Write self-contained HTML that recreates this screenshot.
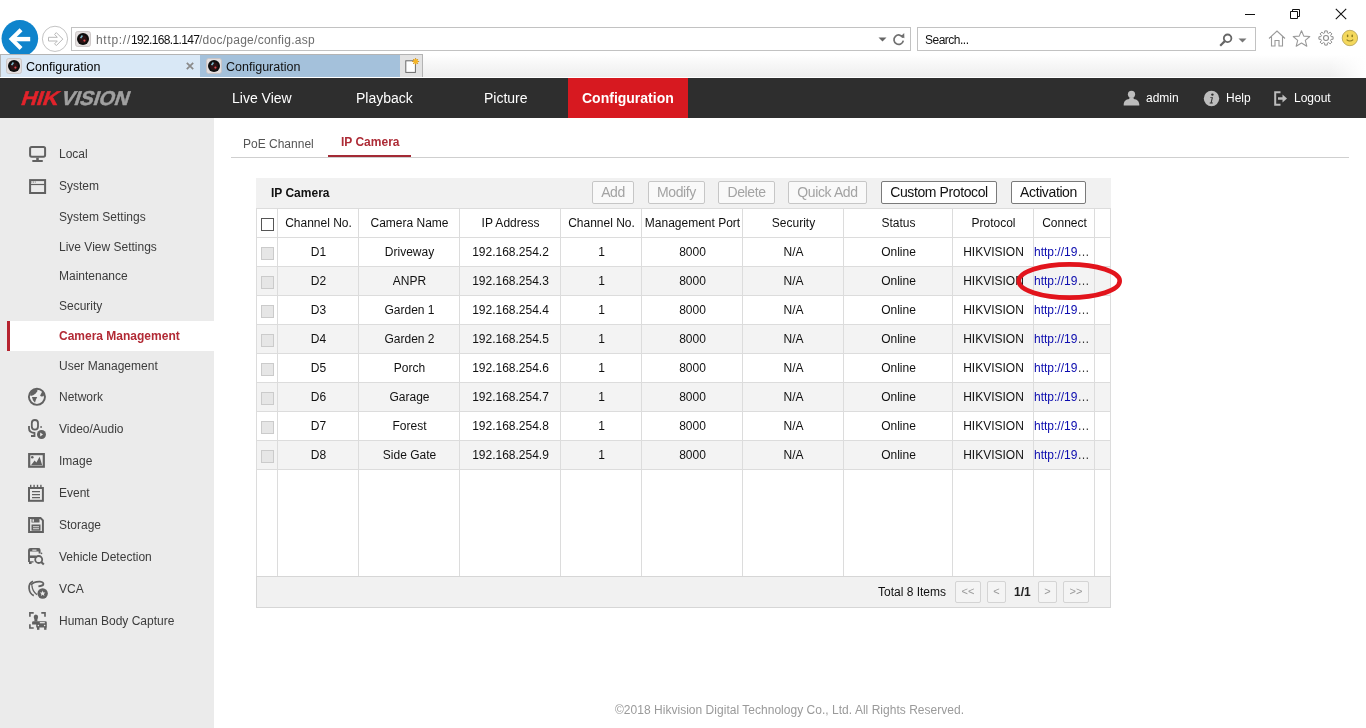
<!DOCTYPE html>
<html><head><meta charset="utf-8">
<style>
*{margin:0;padding:0;box-sizing:border-box}
html,body{width:1366px;height:728px;overflow:hidden;background:#fff;font-family:"Liberation Sans",sans-serif}
body{position:relative}
.a{position:absolute}
svg.a{display:block;overflow:visible}
.t{position:absolute;white-space:nowrap;line-height:1}
.nav{color:#fff;font-size:14px;top:91px}
.si{color:#3c3c3c;font-size:12px;left:59px}
.cell{position:absolute;text-align:center;font-size:12px;color:#111;white-space:nowrap;line-height:29px}
.hl{height:1px;background:#dcdcdc}
.vl{width:1px;background:#dcdcdc}
.btn{font-size:14px;letter-spacing:-0.39px;text-align:center;line-height:20px;border-radius:2px}
.pbtn{border:1px solid #d4d4d4;border-radius:2px;background:#f4f4f4;color:#9a9a9a;font-size:11px;text-align:center;line-height:19px}
</style></head><body><div id="root" style="position:absolute;left:0;top:0;width:1366px;height:728px;will-change:transform">
<!-- ===== browser chrome ===== -->
<div class="a" style="left:0;top:0;width:1366px;height:78px;background:#fff"></div>
<!-- window controls -->
<div class="a" style="left:1245px;top:14px;width:10px;height:1px;background:#111"></div>
<svg class="a" style="left:1289px;top:8px" width="12" height="12" viewBox="0 0 12 12"><path d="M1.5 3.5h7v7h-7z M3.5 3.5v-2h7v7h-2" fill="none" stroke="#111" stroke-width="1"/></svg>
<svg class="a" style="left:1335px;top:8px" width="12" height="12" viewBox="0 0 12 12"><path d="M0.8 0.8L11.2 11.2M11.2 0.8L0.8 11.2" stroke="#111" stroke-width="1.1"/></svg>
<!-- back / forward -->
<svg class="a" style="left:0;top:19px" width="72" height="36" viewBox="0 19 72 36">
 <defs><clipPath id="cl"><rect x="0" y="0" width="72" height="54"/></clipPath></defs>
 <circle cx="19.85" cy="38.4" r="18.3" fill="#0f84cc" clip-path="url(#cl)"/>
 <path d="M11 39.1h19.2" stroke="#fff" stroke-width="4.4"/>
 <path d="M19.6 31.2L11.6 39.1L19.6 47" fill="none" stroke="#fff" stroke-width="4.1" stroke-linecap="square"/>
 <circle cx="55" cy="38.85" r="12.6" fill="none" stroke="#c4c4c4" stroke-width="1"/>
 <path d="M48.5 37.3H57.3L54.6 34.4L56.3 32.6L62.8 39.1L56.3 45.6L54.6 43.8L57.3 41H48.5Z" fill="none" stroke="#b8b8b8" stroke-width="1"/>
</svg>
<svg width="0" height="0" style="position:absolute"><defs>
 <symbol id="fav" viewBox="0 0 16 16">
  <rect x="0.5" y="0.5" width="15" height="15" rx="2.2" fill="#e4dfdf" stroke="#c9c4c4" stroke-width="0.9"/>
  <circle cx="8" cy="8" r="6" fill="#0d0d0d"/>
  <circle cx="8" cy="8.2" r="3.9" fill="#2b1214"/>
  <path d="M5.6 7.2L7.4 4.5" stroke="#7cc0d2" stroke-width="1.5"/>
  <circle cx="9.4" cy="9.6" r="1.1" fill="#d9494c"/>
 </symbol>
</defs></svg>
<!-- address bar -->
<div class="a" style="left:71px;top:27px;width:840px;height:24px;border:1px solid #c2c2c2;background:#fff"></div>
<svg class="a" style="left:75px;top:31px" width="16" height="16"><use href="#fav"/></svg>
<div class="t" style="left:96px;top:34px;font-size:12px;color:#6d6d6d;letter-spacing:0.7px">http://</div>
<div class="t" style="left:131px;top:34px;font-size:12px;color:#111;letter-spacing:-0.65px">192.168.1.147</div>
<div class="t" style="left:199px;top:34px;font-size:12px;color:#6d6d6d;letter-spacing:0.26px">/doc/page/config.asp</div>
<svg class="a" style="left:878px;top:37px" width="9" height="5" viewBox="0 0 9 5"><path d="M0.5 0.5h8L4.5 4.5z" fill="#666"/></svg>
<svg class="a" style="left:892px;top:32px" width="14" height="14" viewBox="0 0 14 14"><path d="M10.9 5.6A4.7 4.7 0 1 0 11.3 8.6" fill="none" stroke="#707070" stroke-width="1.7"/><path d="M8.6 4.6L12.2 0.9L12.4 6.3Z" fill="#707070"/></svg>
<!-- search -->
<div class="a" style="left:917px;top:27px;width:339px;height:24px;border:1px solid #c2c2c2;background:#fff"></div>
<div class="t" style="left:925px;top:34px;font-size:12px;color:#111;letter-spacing:-0.5px">Search...</div>
<svg class="a" style="left:1219px;top:33px" width="14" height="14" viewBox="0 0 14 14"><circle cx="8.6" cy="5.3" r="3.8" fill="none" stroke="#666" stroke-width="1.8"/><path d="M5.8 8.1L1.2 12.7" stroke="#666" stroke-width="2.2"/></svg>
<svg class="a" style="left:1238px;top:38px" width="9" height="5" viewBox="0 0 9 5"><path d="M0.5 0.5h8L4.5 4.5z" fill="#777"/></svg>
<!-- toolbar icons -->
<svg class="a" style="left:1268px;top:30px" width="18" height="17" viewBox="0 0 18 17"><path d="M1 8.5L9 1L17 8.5 M3.5 6.5V16H7V10.5H11V16H14.5V6.5" fill="none" stroke="#9a9a9a" stroke-width="1.1"/></svg>
<svg class="a" style="left:1292px;top:30px" width="19" height="17" viewBox="0 0 19 17"><path d="M9.5 0.8L11.8 6.1L17.8 6.5L13.3 10.3L14.8 16.2L9.5 13L4.2 16.2L5.7 10.3L1.2 6.5L7.2 6.1Z" fill="none" stroke="#9a9a9a" stroke-width="1.1" stroke-linejoin="round"/></svg>
<svg class="a" style="left:1318px;top:30px" width="16" height="16" viewBox="0 0 16 16"><path d="M13.13 6.67 L15.09 6.74 L15.09 9.26 L13.13 9.33 L12.57 10.69 L13.90 12.12 L12.12 13.90 L10.69 12.57 L9.33 13.13 L9.26 15.09 L6.74 15.09 L6.67 13.13 L5.31 12.57 L3.88 13.90 L2.10 12.12 L3.43 10.69 L2.87 9.33 L0.91 9.26 L0.91 6.74 L2.87 6.67 L3.43 5.31 L2.10 3.88 L3.88 2.10 L5.31 3.43 L6.67 2.87 L6.74 0.91 L9.26 0.91 L9.33 2.87 L10.69 3.43 L12.12 2.10 L13.90 3.88 L12.57 5.31Z" fill="none" stroke="#8e8e8e" stroke-width="1" stroke-linejoin="round"/><circle cx="8" cy="8" r="2.5" fill="none" stroke="#8e8e8e" stroke-width="1.1"/></svg>
<svg class="a" style="left:1341px;top:29px" width="18" height="18" viewBox="0 0 18 18"><circle cx="8.9" cy="9" r="7.7" fill="#f4d85c" stroke="#b9a75e" stroke-width="0.9"/><ellipse cx="6.6" cy="6.9" rx="0.8" ry="1.3" fill="#8a7a20"/><ellipse cx="11.2" cy="6.9" rx="0.8" ry="1.3" fill="#8a7a20"/><path d="M5.6 10.6Q8.9 13.4 12.2 10.6" fill="none" stroke="#8a7a20" stroke-width="1.1"/></svg>
<!-- tab strip -->
<div class="a" style="left:0;top:55px;width:1366px;height:22px;background:linear-gradient(#fff 0%,#f9f9f9 30%,#eeeeee 100%)"></div>
<div class="a" style="left:1330px;top:55px;width:36px;height:22px;background:linear-gradient(90deg,rgba(255,255,255,0),#fff)"></div>
<div class="a" style="left:0;top:54px;width:423px;height:1px;background:#b4b4b4"></div>
<div class="a" style="left:0;top:55px;width:1px;height:22px;background:#b4b4b4"></div>
<div class="a" style="left:1px;top:55px;width:199px;height:22px;background:#d9e8f6"></div>
<div class="a" style="left:200px;top:55px;width:200px;height:22px;background:#a4c1db"></div>
<div class="a" style="left:400px;top:55px;width:23px;height:22px;background:#e3e3e3;border-right:1px solid #b4b4b4"></div>
<svg class="a" style="left:404px;top:56px" width="18" height="18" viewBox="404 56 18 18"><rect x="405.8" y="60.8" width="9.6" height="11.6" fill="#fff" stroke="#6a6a6a" stroke-width="1"/><path d="M415.6 58v7M412.1 61.5h7M413.1 59l5 5M418.1 59l-5 5" stroke="#c98a1c" stroke-width="0.9"/><circle cx="415.6" cy="61.5" r="2.4" fill="#f5b525"/></svg>
<svg class="a" style="left:186px;top:62px" width="8" height="8" viewBox="0 0 8 8"><path d="M0.8 0.8L7.2 7.2M7.2 0.8L0.8 7.2" stroke="#8a8a8a" stroke-width="1.7"/></svg>
<div class="t" style="left:26px;top:61px;font-size:12.5px;color:#000">Configuration</div>
<div class="t" style="left:226px;top:61px;font-size:12.5px;color:#111">Configuration</div>

<svg class="a" style="left:6px;top:58px" width="16" height="16"><use href="#fav"/></svg>
<svg class="a" style="left:206px;top:58px" width="16" height="16"><use href="#fav"/></svg>

<!-- ===== header ===== -->
<div class="a" style="left:0;top:78px;width:1366px;height:40px;background:#2e2e2e"></div>
<div class="t" style="left:19px;top:88px;font-size:20px;font-weight:bold;color:#e1232b;transform:skewX(-18deg) scaleX(1.08);transform-origin:0 100%;-webkit-text-stroke:0.5px #e1232b">HIK</div>
<div class="t" style="left:58.5px;top:88px;font-size:20px;font-weight:bold;color:#a0a0a0;transform:skewX(-18deg) scaleX(1.0);transform-origin:0 100%;-webkit-text-stroke:0.5px #a0a0a0">VISION</div>
<div class="t nav" style="left:232px">Live View</div>
<div class="t nav" style="left:356px">Playback</div>
<div class="t nav" style="left:484px">Picture</div>
<div class="a" style="left:568px;top:78px;width:120px;height:40px;background:#d71920"></div>
<div class="t nav" style="left:582px;font-weight:bold">Configuration</div>
<svg class="a" style="left:1123px;top:90px" width="17" height="16" viewBox="0 0 17 16"><circle cx="8.5" cy="4.3" r="3.6" fill="#bdbdbd"/><path d="M6.3 7.4h4.4v1.6c3.6 0.6 5.2 2 5.6 5.4V15.5H0.7V14.4c0.4-3.4 2-4.8 5.6-5.4z" fill="#bdbdbd"/></svg>
<div class="t" style="left:1146px;top:92px;font-size:12px;color:#fff">admin</div>
<svg class="a" style="left:1203px;top:90px" width="17" height="17" viewBox="0 0 17 17"><circle cx="8.5" cy="8.5" r="7.7" fill="#bdbdbd"/><circle cx="9.4" cy="4.6" r="1.2" fill="#2e2e2e"/><path d="M7.4 7.2h2.6l-1.3 5.4h1.2l-0.2 0.9H6.6l0.2-0.9h0.9l1-4.5h-1.5z" fill="#2e2e2e"/></svg>
<div class="t" style="left:1226px;top:92px;font-size:12px;color:#fff">Help</div>
<svg class="a" style="left:1274px;top:91px" width="14" height="15" viewBox="0 0 14 15"><path d="M6.5 1.2H1.2v12.6h5.3" fill="none" stroke="#bdbdbd" stroke-width="2"/><path d="M4 6.3h4.5V3.5L13 7.5L8.5 11.5V8.7H4z" fill="#bdbdbd"/></svg>
<div class="t" style="left:1294px;top:92px;font-size:12px;color:#fff">Logout</div>

<!-- ===== sidebar ===== -->
<div class="a" style="left:0;top:118px;width:214px;height:610px;background:#ebebeb"></div>
<div class="a" style="left:7px;top:321px;width:207px;height:30px;background:#fff"></div>
<div class="a" style="left:7px;top:321px;width:3px;height:30px;background:#b6232f"></div>
<div class="t si" style="top:148px">Local</div>
<div class="t si" style="top:180px">System</div>
<div class="t si" style="top:211px">System Settings</div>
<div class="t si" style="top:241px">Live View Settings</div>
<div class="t si" style="top:270px">Maintenance</div>
<div class="t si" style="top:300px">Security</div>
<div class="t si" style="top:330px;color:#b22a35;font-weight:bold">Camera Management</div>
<div class="t si" style="top:360px">User Management</div>
<div class="t si" style="top:391px">Network</div>
<div class="t si" style="top:423px">Video/Audio</div>
<div class="t si" style="top:455px">Image</div>
<div class="t si" style="top:487px">Event</div>
<div class="t si" style="top:519px">Storage</div>
<div class="t si" style="top:551px">Vehicle Detection</div>
<div class="t si" style="top:583px">VCA</div>
<div class="t si" style="top:615px">Human Body Capture</div>
<svg class="a" style="left:0;top:118px" width="60" height="520" viewBox="0 118 60 520">
 <g fill="none" stroke="#616161">
  <!-- local monitor -->
  <rect x="30.1" y="146.9" width="15" height="9.8" rx="1.6" stroke-width="2"/>
  <path d="M37.5 157.7V160.3" stroke-width="2.6"/>
  <path d="M33 161h9.1" stroke-width="1.8" stroke-linecap="round"/>
  <!-- system window -->
  <rect x="30.1" y="180.1" width="15" height="12.9" stroke-width="2"/>
  <path d="M31 184.5h13.5" stroke-width="1.2"/>
  <!-- image -->
  <rect x="29.2" y="454.1" width="14.6" height="12.6" stroke-width="2.2"/>
  <!-- event -->
  <rect x="29" y="488" width="13.9" height="12.8" stroke-width="2"/>
  <path d="M32 491.7h8M32 494.6h8M32 497.6h8" stroke-width="1.3"/>
  <!-- storage -->
  <path d="M29.1 518H40.5L42.9 520.4V531.9H29.1Z" stroke-width="2"/>
  <!-- globe -->
  <circle cx="36.95" cy="396.8" r="8.05" stroke-width="1.9"/>
  <!-- mic -->
  <rect x="31.8" y="420" width="6.2" height="9.7" rx="3.1" stroke-width="1.8"/>
  <path d="M29 426V428.5Q29 432.3 34.5 433V436h-3.5" stroke-width="1.8"/>
  <!-- vca -->
  <path d="M33 581.3Q28.7 582.8 29.1 588.5Q29.6 593.8 33.8 595.6" stroke-width="1.7"/>
  <path d="M31.9 585.2Q32.2 591 37 594.8" stroke-width="1.3"/>
  <path d="M30.9 585Q33.6 581.3 40 581.6Q44 582.1 43.3 584.5Q42.6 586 38.4 586.4" stroke-width="1.8"/>
  <!-- vehicle detection bus -->
  <path d="M29 562V550.5Q29 549 31 549H38Q39.6 549 39.6 550.5V553.5" stroke-width="1.9"/>
  <path d="M29.5 556.8H35" stroke-width="1.8"/>
  <circle cx="38.7" cy="559.5" r="3.5" stroke-width="1.8"/>
  <path d="M41.2 562L43.8 564.6" stroke-width="2.1"/>
  <!-- hbc brackets -->
  <path d="M29.9 616.7v-3.8h3.8M41.3 612.9h3.7v3.8M29.9 624.2v3.8h3.8" stroke-width="1.65"/>
 </g>
 <g fill="#616161">
  <rect x="31.4" y="181.6" width="0.9" height="0.9"/><rect x="33.1" y="181.6" width="0.9" height="0.9"/><rect x="34.8" y="181.6" width="0.9" height="0.9"/>
  <circle cx="32.3" cy="457.3" r="1.3"/>
  <path d="M31 465.2L34.6 460.6L36.4 462.6L39.6 456.8L42.2 465.2Z"/>
  <rect x="30" y="484.8" width="1.4" height="2.6"/><rect x="33.4" y="484.8" width="1.4" height="2.6"/><rect x="36.8" y="484.8" width="1.4" height="2.6"/><rect x="40.2" y="484.8" width="1.4" height="2.6"/>
  <rect x="31.5" y="518.5" width="8" height="4"/>
  <rect x="31.5" y="524.5" width="9" height="6.2"/>
  <!-- globe continents -->
  <path d="M30 394L32 390.5L35.5 388.9L37.6 389.4L37.2 391.6L35.6 393.6L33.2 395.3L30.6 395.9Z"/>
  <path d="M31.9 396.9H37.2L35.8 400L35 402.8L33 400.3Z"/>
  <path d="M42.4 391L44.6 393.5L43.6 396.3L41.3 396.6L40.1 395.8Z"/>
  <rect x="40.3" y="426.2" width="1.6" height="1.6"/>
  <circle cx="41.5" cy="434.5" r="4.5"/>
  <circle cx="42.65" cy="593.5" r="5.2"/>
  <rect x="29.5" y="548.5" width="10.2" height="3"/>
  <path d="M29 555.5H36.5V558H29Z"/>
  <path d="M29 561.3H33.5V562.6H31.6V564H29Z"/>
  <circle cx="41.5" cy="553.4" r="0.8"/>
  <ellipse cx="35.9" cy="616.9" rx="2.2" ry="2.5"/>
  <rect x="34.4" y="618.5" width="3" height="3"/>
  <path d="M32.1 624.5V622.3Q32.1 621.2 33.4 621.2H45.6Q46.8 621.2 46.8 622.5V627.6H36.2V624.5Z"/>
  <rect x="37" y="627" width="2.4" height="2.8"/><rect x="44.1" y="627" width="2.4" height="2.8"/>
 </g>
 <g fill="#ebebeb">
  <path d="M40.2 432.4L43 434.5L40.2 436.6Z"/>
  <path d="M42.65 590.6L43.4 592.5L45.4 592.6L43.9 593.9L44.4 595.9L42.65 594.8L40.9 595.9L41.4 593.9L39.9 592.6L41.9 592.5Z"/>
  <rect x="32.5" y="519.3" width="1.4" height="2.5"/>
  <rect x="33" y="526.3" width="6" height="0.9"/><rect x="33" y="528.3" width="6" height="0.9"/>
  <rect x="32.3" y="549.6" width="4.2" height="1.1"/>
  <circle cx="31" cy="559.4" r="0.9"/>
  <rect x="39.8" y="622.1" width="5" height="1.2"/>
  <circle cx="38.4" cy="625.5" r="0.75"/><circle cx="44.6" cy="625.5" r="0.75"/>
 </g>
</svg>

<!-- ===== content ===== -->
<div class="t" style="left:243px;top:138px;font-size:12px;color:#555">PoE Channel</div>
<div class="t" style="left:341px;top:136px;font-size:12px;color:#ad2b36;font-weight:bold">IP Camera</div>
<div class="a" style="left:231px;top:157px;width:1118px;height:1px;background:#cfcfcf"></div>
<div class="a" style="left:328px;top:155px;width:83px;height:2px;background:#a32a35"></div>
<div class="a" style="left:256px;top:178px;width:855px;height:30px;background:#f1f1f1"></div>
<div class="t" style="left:271px;top:187px;font-size:12px;color:#111;font-weight:bold">IP Camera</div>
<div class="a btn" style="left:592px;top:181px;width:42px;height:23px;border:1px solid #c6c6c6;background:#f9f9f9;color:#a3a3a3">Add</div>
<div class="a btn" style="left:648px;top:181px;width:57px;height:23px;border:1px solid #c6c6c6;background:#f9f9f9;color:#a3a3a3">Modify</div>
<div class="a btn" style="left:718px;top:181px;width:57px;height:23px;border:1px solid #c6c6c6;background:#f9f9f9;color:#a3a3a3">Delete</div>
<div class="a btn" style="left:788px;top:181px;width:79px;height:23px;border:1px solid #c6c6c6;background:#f9f9f9;color:#a3a3a3">Quick Add</div>
<div class="a btn" style="left:881px;top:181px;width:116px;height:23px;border:1px solid #7a7a7a;background:#fff;color:#111">Custom Protocol</div>
<div class="a btn" style="left:1011px;top:181px;width:75px;height:23px;border:1px solid #7a7a7a;background:#fff;color:#111">Activation</div>
<div class="a" style="left:256px;top:208px;width:855px;height:368px;background:#fff"></div>
<div class="a" style="left:256px;top:266px;width:854px;height:29px;background:#f3f3f3"></div>
<div class="a" style="left:256px;top:324px;width:854px;height:29px;background:#f3f3f3"></div>
<div class="a" style="left:256px;top:382px;width:854px;height:29px;background:#f3f3f3"></div>
<div class="a" style="left:256px;top:440px;width:854px;height:29px;background:#f3f3f3"></div>
<div class="a hl" style="left:256px;top:208px;width:854px"></div>
<div class="a hl" style="left:256px;top:237px;width:854px"></div>
<div class="a hl" style="left:256px;top:266px;width:854px"></div>
<div class="a hl" style="left:256px;top:295px;width:854px"></div>
<div class="a hl" style="left:256px;top:324px;width:854px"></div>
<div class="a hl" style="left:256px;top:353px;width:854px"></div>
<div class="a hl" style="left:256px;top:382px;width:854px"></div>
<div class="a hl" style="left:256px;top:411px;width:854px"></div>
<div class="a hl" style="left:256px;top:440px;width:854px"></div>
<div class="a hl" style="left:256px;top:469px;width:854px"></div>
<div class="a vl" style="left:256px;top:208px;height:368px"></div>
<div class="a vl" style="left:277px;top:208px;height:368px"></div>
<div class="a vl" style="left:358px;top:208px;height:368px"></div>
<div class="a vl" style="left:459px;top:208px;height:368px"></div>
<div class="a vl" style="left:560px;top:208px;height:368px"></div>
<div class="a vl" style="left:641px;top:208px;height:368px"></div>
<div class="a vl" style="left:742px;top:208px;height:368px"></div>
<div class="a vl" style="left:843px;top:208px;height:368px"></div>
<div class="a vl" style="left:952px;top:208px;height:368px"></div>
<div class="a vl" style="left:1033px;top:208px;height:368px"></div>
<div class="a vl" style="left:1094px;top:208px;height:368px"></div>
<div class="a vl" style="left:1110px;top:208px;height:368px"></div>
<div class="a" style="left:256px;top:576px;width:855px;height:32px;background:#f1f1f1;border:1px solid #d6d6d6"></div>
<div class="cell" style="left:278px;top:209px;width:81px;height:29px">Channel No.</div>
<div class="cell" style="left:359px;top:209px;width:101px;height:29px">Camera Name</div>
<div class="cell" style="left:460px;top:209px;width:101px;height:29px">IP Address</div>
<div class="cell" style="left:561px;top:209px;width:81px;height:29px">Channel No.</div>
<div class="cell" style="left:642px;top:209px;width:101px;height:29px">Management Port</div>
<div class="cell" style="left:743px;top:209px;width:101px;height:29px">Security</div>
<div class="cell" style="left:844px;top:209px;width:109px;height:29px">Status</div>
<div class="cell" style="left:953px;top:209px;width:81px;height:29px">Protocol</div>
<div class="cell" style="left:1034px;top:209px;width:61px;height:29px">Connect</div>
<div class="a" style="left:261px;top:218px;width:13px;height:13px;border:1px solid #555;background:#fff"></div>
<div class="a" style="left:261px;top:247px;width:13px;height:13px;border:1px solid #cbcbcb;background:#e6e6e6"></div>
<div class="cell" style="left:278px;top:238px;width:81px;height:29px">D1</div>
<div class="cell" style="left:359px;top:238px;width:101px;height:29px">Driveway</div>
<div class="cell" style="left:460px;top:238px;width:101px;height:29px">192.168.254.2</div>
<div class="cell" style="left:561px;top:238px;width:81px;height:29px">1</div>
<div class="cell" style="left:642px;top:238px;width:101px;height:29px">8000</div>
<div class="cell" style="left:743px;top:238px;width:101px;height:29px">N/A</div>
<div class="cell" style="left:844px;top:238px;width:109px;height:29px">Online</div>
<div class="cell" style="left:953px;top:238px;width:81px;height:29px">HIKVISION</div>
<div class="cell" style="left:1034px;top:238px;text-align:left;color:#0b0bae">http://19<span style="color:#333">…</span></div>
<div class="a" style="left:261px;top:276px;width:13px;height:13px;border:1px solid #cbcbcb;background:#e6e6e6"></div>
<div class="cell" style="left:278px;top:267px;width:81px;height:29px">D2</div>
<div class="cell" style="left:359px;top:267px;width:101px;height:29px">ANPR</div>
<div class="cell" style="left:460px;top:267px;width:101px;height:29px">192.168.254.3</div>
<div class="cell" style="left:561px;top:267px;width:81px;height:29px">1</div>
<div class="cell" style="left:642px;top:267px;width:101px;height:29px">8000</div>
<div class="cell" style="left:743px;top:267px;width:101px;height:29px">N/A</div>
<div class="cell" style="left:844px;top:267px;width:109px;height:29px">Online</div>
<div class="cell" style="left:953px;top:267px;width:81px;height:29px">HIKVISION</div>
<div class="cell" style="left:1034px;top:267px;text-align:left;color:#0b0bae">http://19<span style="color:#333">…</span></div>
<div class="a" style="left:261px;top:305px;width:13px;height:13px;border:1px solid #cbcbcb;background:#e6e6e6"></div>
<div class="cell" style="left:278px;top:296px;width:81px;height:29px">D3</div>
<div class="cell" style="left:359px;top:296px;width:101px;height:29px">Garden 1</div>
<div class="cell" style="left:460px;top:296px;width:101px;height:29px">192.168.254.4</div>
<div class="cell" style="left:561px;top:296px;width:81px;height:29px">1</div>
<div class="cell" style="left:642px;top:296px;width:101px;height:29px">8000</div>
<div class="cell" style="left:743px;top:296px;width:101px;height:29px">N/A</div>
<div class="cell" style="left:844px;top:296px;width:109px;height:29px">Online</div>
<div class="cell" style="left:953px;top:296px;width:81px;height:29px">HIKVISION</div>
<div class="cell" style="left:1034px;top:296px;text-align:left;color:#0b0bae">http://19<span style="color:#333">…</span></div>
<div class="a" style="left:261px;top:334px;width:13px;height:13px;border:1px solid #cbcbcb;background:#e6e6e6"></div>
<div class="cell" style="left:278px;top:325px;width:81px;height:29px">D4</div>
<div class="cell" style="left:359px;top:325px;width:101px;height:29px">Garden 2</div>
<div class="cell" style="left:460px;top:325px;width:101px;height:29px">192.168.254.5</div>
<div class="cell" style="left:561px;top:325px;width:81px;height:29px">1</div>
<div class="cell" style="left:642px;top:325px;width:101px;height:29px">8000</div>
<div class="cell" style="left:743px;top:325px;width:101px;height:29px">N/A</div>
<div class="cell" style="left:844px;top:325px;width:109px;height:29px">Online</div>
<div class="cell" style="left:953px;top:325px;width:81px;height:29px">HIKVISION</div>
<div class="cell" style="left:1034px;top:325px;text-align:left;color:#0b0bae">http://19<span style="color:#333">…</span></div>
<div class="a" style="left:261px;top:363px;width:13px;height:13px;border:1px solid #cbcbcb;background:#e6e6e6"></div>
<div class="cell" style="left:278px;top:354px;width:81px;height:29px">D5</div>
<div class="cell" style="left:359px;top:354px;width:101px;height:29px">Porch</div>
<div class="cell" style="left:460px;top:354px;width:101px;height:29px">192.168.254.6</div>
<div class="cell" style="left:561px;top:354px;width:81px;height:29px">1</div>
<div class="cell" style="left:642px;top:354px;width:101px;height:29px">8000</div>
<div class="cell" style="left:743px;top:354px;width:101px;height:29px">N/A</div>
<div class="cell" style="left:844px;top:354px;width:109px;height:29px">Online</div>
<div class="cell" style="left:953px;top:354px;width:81px;height:29px">HIKVISION</div>
<div class="cell" style="left:1034px;top:354px;text-align:left;color:#0b0bae">http://19<span style="color:#333">…</span></div>
<div class="a" style="left:261px;top:392px;width:13px;height:13px;border:1px solid #cbcbcb;background:#e6e6e6"></div>
<div class="cell" style="left:278px;top:383px;width:81px;height:29px">D6</div>
<div class="cell" style="left:359px;top:383px;width:101px;height:29px">Garage</div>
<div class="cell" style="left:460px;top:383px;width:101px;height:29px">192.168.254.7</div>
<div class="cell" style="left:561px;top:383px;width:81px;height:29px">1</div>
<div class="cell" style="left:642px;top:383px;width:101px;height:29px">8000</div>
<div class="cell" style="left:743px;top:383px;width:101px;height:29px">N/A</div>
<div class="cell" style="left:844px;top:383px;width:109px;height:29px">Online</div>
<div class="cell" style="left:953px;top:383px;width:81px;height:29px">HIKVISION</div>
<div class="cell" style="left:1034px;top:383px;text-align:left;color:#0b0bae">http://19<span style="color:#333">…</span></div>
<div class="a" style="left:261px;top:421px;width:13px;height:13px;border:1px solid #cbcbcb;background:#e6e6e6"></div>
<div class="cell" style="left:278px;top:412px;width:81px;height:29px">D7</div>
<div class="cell" style="left:359px;top:412px;width:101px;height:29px">Forest</div>
<div class="cell" style="left:460px;top:412px;width:101px;height:29px">192.168.254.8</div>
<div class="cell" style="left:561px;top:412px;width:81px;height:29px">1</div>
<div class="cell" style="left:642px;top:412px;width:101px;height:29px">8000</div>
<div class="cell" style="left:743px;top:412px;width:101px;height:29px">N/A</div>
<div class="cell" style="left:844px;top:412px;width:109px;height:29px">Online</div>
<div class="cell" style="left:953px;top:412px;width:81px;height:29px">HIKVISION</div>
<div class="cell" style="left:1034px;top:412px;text-align:left;color:#0b0bae">http://19<span style="color:#333">…</span></div>
<div class="a" style="left:261px;top:450px;width:13px;height:13px;border:1px solid #cbcbcb;background:#e6e6e6"></div>
<div class="cell" style="left:278px;top:441px;width:81px;height:29px">D8</div>
<div class="cell" style="left:359px;top:441px;width:101px;height:29px">Side Gate</div>
<div class="cell" style="left:460px;top:441px;width:101px;height:29px">192.168.254.9</div>
<div class="cell" style="left:561px;top:441px;width:81px;height:29px">1</div>
<div class="cell" style="left:642px;top:441px;width:101px;height:29px">8000</div>
<div class="cell" style="left:743px;top:441px;width:101px;height:29px">N/A</div>
<div class="cell" style="left:844px;top:441px;width:109px;height:29px">Online</div>
<div class="cell" style="left:953px;top:441px;width:81px;height:29px">HIKVISION</div>
<div class="cell" style="left:1034px;top:441px;text-align:left;color:#0b0bae">http://19<span style="color:#333">…</span></div>
<div class="t" style="left:878px;top:586px;font-size:12px;color:#111">Total 8 Items</div>
<div class="a pbtn" style="left:955px;top:581px;width:26px;height:22px">&lt;&lt;</div>
<div class="a pbtn" style="left:987px;top:581px;width:19px;height:22px">&lt;</div>
<div class="a pbtn" style="left:1038px;top:581px;width:19px;height:22px">&gt;</div>
<div class="a pbtn" style="left:1063px;top:581px;width:26px;height:22px">&gt;&gt;</div>
<div class="t" style="left:1014px;top:586px;font-size:12px;color:#222;font-weight:bold">1/1</div>
<svg class="a" style="left:1010px;top:255px" width="120" height="52" viewBox="1010 255 120 52"><ellipse cx="1069.2" cy="281" rx="50.5" ry="16.6" fill="none" stroke="#e2141c" stroke-width="4.6"/></svg>
<div class="t" style="left:615px;top:704px;font-size:12px;color:#9a9a9a;letter-spacing:0.025px">©2018 Hikvision Digital Technology Co., Ltd. All Rights Reserved.</div></div></body></html>
